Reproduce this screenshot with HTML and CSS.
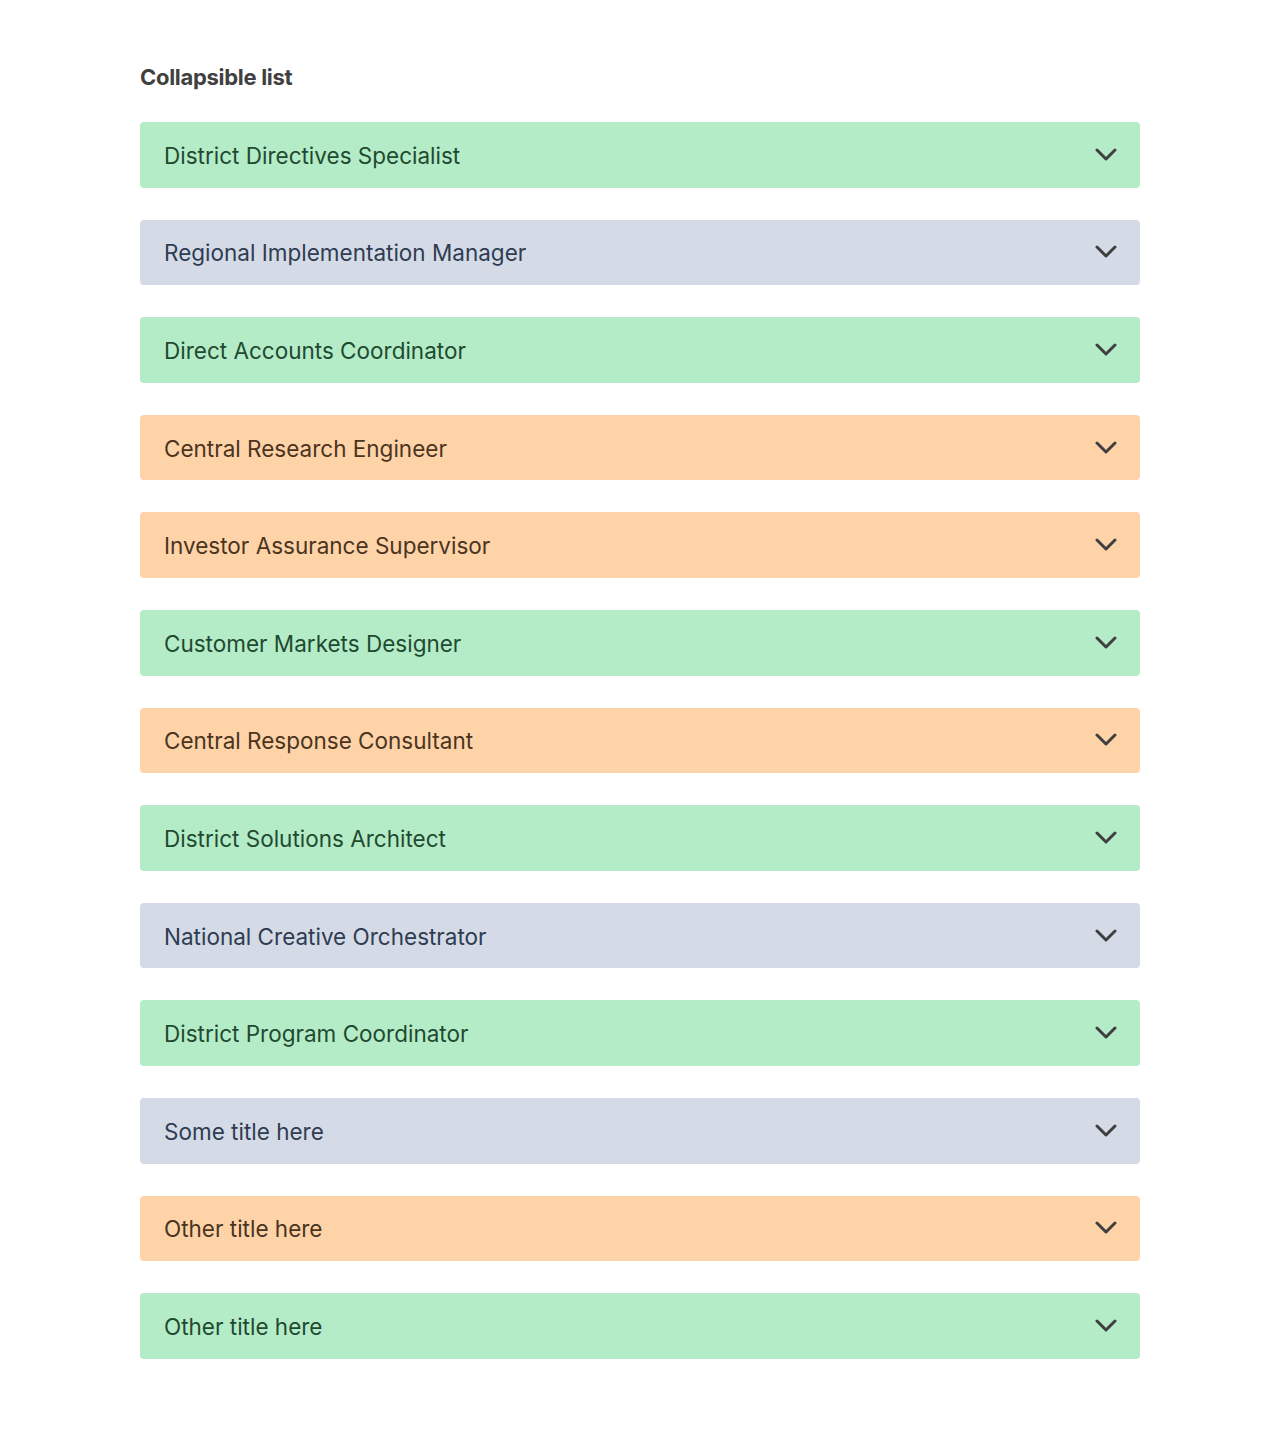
FILE: index.html
```html
<!DOCTYPE html>
<html>
<head>
<meta charset="utf-8">
<link rel="stylesheet" href="styles.css">
</head>
<body>
<main class="page">
  <h1 class="title">Collapsible list</h1>
  <ul class="list">
    <li class="item green"><span>District Directives Specialist</span><svg class="chev" viewBox="0 0 22 14"><polyline points="2,2 11,11 20,2"/></svg></li>
    <li class="item gray"><span>Regional Implementation Manager</span><svg class="chev" viewBox="0 0 22 14"><polyline points="2,2 11,11 20,2"/></svg></li>
    <li class="item green"><span>Direct Accounts Coordinator</span><svg class="chev" viewBox="0 0 22 14"><polyline points="2,2 11,11 20,2"/></svg></li>
    <li class="item orange"><span>Central Research Engineer</span><svg class="chev" viewBox="0 0 22 14"><polyline points="2,2 11,11 20,2"/></svg></li>
    <li class="item orange"><span>Investor Assurance Supervisor</span><svg class="chev" viewBox="0 0 22 14"><polyline points="2,2 11,11 20,2"/></svg></li>
    <li class="item green"><span>Customer Markets Designer</span><svg class="chev" viewBox="0 0 22 14"><polyline points="2,2 11,11 20,2"/></svg></li>
    <li class="item orange"><span>Central Response Consultant</span><svg class="chev" viewBox="0 0 22 14"><polyline points="2,2 11,11 20,2"/></svg></li>
    <li class="item green"><span>District Solutions Architect</span><svg class="chev" viewBox="0 0 22 14"><polyline points="2,2 11,11 20,2"/></svg></li>
    <li class="item gray"><span>National Creative Orchestrator</span><svg class="chev" viewBox="0 0 22 14"><polyline points="2,2 11,11 20,2"/></svg></li>
    <li class="item green"><span>District Program Coordinator</span><svg class="chev" viewBox="0 0 22 14"><polyline points="2,2 11,11 20,2"/></svg></li>
    <li class="item gray"><span>Some title here</span><svg class="chev" viewBox="0 0 22 14"><polyline points="2,2 11,11 20,2"/></svg></li>
    <li class="item orange"><span>Other title here</span><svg class="chev" viewBox="0 0 22 14"><polyline points="2,2 11,11 20,2"/></svg></li>
    <li class="item green"><span>Other title here</span><svg class="chev" viewBox="0 0 22 14"><polyline points="2,2 11,11 20,2"/></svg></li>
  </ul>
</main>
</body>
</html>
```

FILE: styles.css
```css
html, body {
  margin: 0;
  padding: 0;
  background: #ffffff;
}
body {
  font-family: Inter, "Noto Sans", sans-serif;
}
.page {
  width: 1000px;
  margin: 0 auto;
  padding-top: 62px;
}
.title {
  margin: 0 0 30px 0;
  font-size: 22px;
  line-height: 30px;
  font-weight: 700;
  color: #404040;
  letter-spacing: -0.3px;
}
.list {
  list-style: none;
  margin: 0;
  padding: 0;
  display: flex;
  flex-direction: column;
  gap: 32px;
}
.item {
  display: flex;
  align-items: center;
  justify-content: space-between;
  padding: 20px 24px;
  height: 65.6px;
  box-sizing: border-box;
  border-radius: 4px;
  font-size: 22.5px;
  line-height: 26px;
}
.item span {
  padding-top: 2px;
}
.green { background: #b5ecc8; color: #1f4a30; }
.gray { background: #d4dbe6; color: #2f3c52; }
.orange { background: #fed3a8; color: #4a3420; }
.chev {
  width: 22px;
  height: 14px;
  margin-right: -1px;
  fill: none;
  stroke: #3f3f3f;
  stroke-width: 3;
  stroke-linecap: round;
  stroke-linejoin: round;
}
```
